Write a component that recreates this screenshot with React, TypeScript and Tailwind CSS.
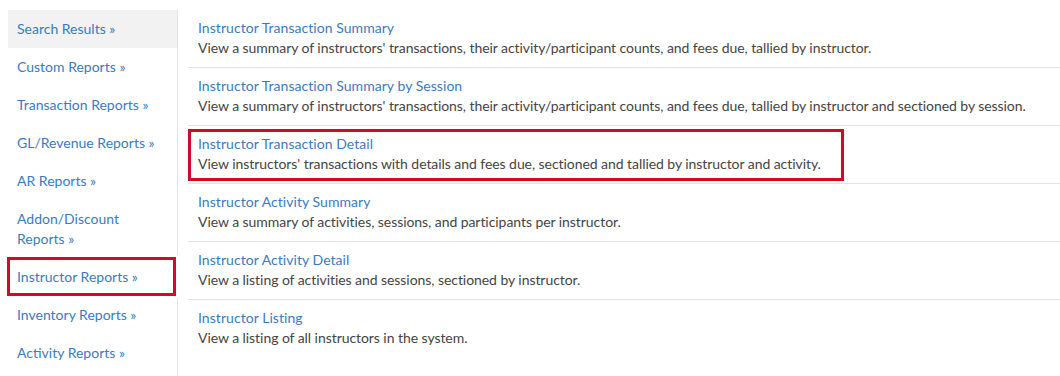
import React from "react";

const sideLinks = [
  "Search Results",
  "Custom Reports",
  "Transaction Reports",
  "GL/Revenue Reports",
  "AR Reports",
  "Addon/Discount Reports",
  "Instructor Reports",
  "Inventory Reports",
  "Activity Reports",
];

const reports = [
  {
    title: "Instructor Transaction Summary",
    desc: "View a summary of instructors' transactions, their activity/participant counts, and fees due, tallied by instructor.",
  },
  {
    title: "Instructor Transaction Summary by Session",
    desc: "View a summary of instructors' transactions, their activity/participant counts, and fees due, tallied by instructor and sectioned by session.",
  },
  {
    title: "Instructor Transaction Detail",
    desc: "View instructors' transactions with details and fees due, sectioned and tallied by instructor and activity.",
    marked: true,
  },
  {
    title: "Instructor Activity Summary",
    desc: "View a summary of activities, sessions, and participants per instructor.",
  },
  {
    title: "Instructor Activity Detail",
    desc: "View a listing of activities and sessions, sectioned by instructor.",
  },
  {
    title: "Instructor Listing",
    desc: "View a listing of all instructors in the system.",
  },
];

const App = () => {
  return (
    <div className="w-[1060px] h-[376px] overflow-hidden bg-white pt-[10px] pl-2 flex font-['Lato','Liberation_Sans',sans-serif] text-[14px]">
      <aside className="w-[170px] shrink-0 border-r border-[#e3e3e3] h-[400px]">
        <ul>
          {sideLinks.map((label, i) => (
            <li
              key={label}
              className={`relative px-[9px] py-[9px] leading-5 ${i === 0 ? "bg-[#f2f2f2]" : ""}`}
            >
              <a className="text-[#3a7bbf] cursor-pointer">
                {label} »
              </a>
              {label === "Instructor Reports" && (
                <span className="absolute -left-px -top-px w-[169px] h-[39px] border-[3px] border-[#cf0a2c] shadow-[0_0_0_2px_white]" />
              )}
            </li>
          ))}
        </ul>
      </aside>

      <main className="flex-1 pl-[10px]">
        {reports.map((r, i) => (
          <div
            key={r.title}
            className={`relative px-[10px] pt-2 pb-[9px] leading-5 ${
              i < reports.length - 1 ? "border-b border-[#e3e3e3]" : ""
            }`}
          >
            <a className="block text-[#3a7bbf] tracking-[0.05px] cursor-pointer">{r.title}</a>
            <p className="text-[#444] tracking-[-0.06px]">{r.desc}</p>
            {r.marked && (
              <span className="absolute left-0 top-[3px] w-[656px] h-[52px] border-[3px] border-[#cf0a2c]" />
            )}
          </div>
        ))}
      </main>
    </div>
  );
};

export default App;
